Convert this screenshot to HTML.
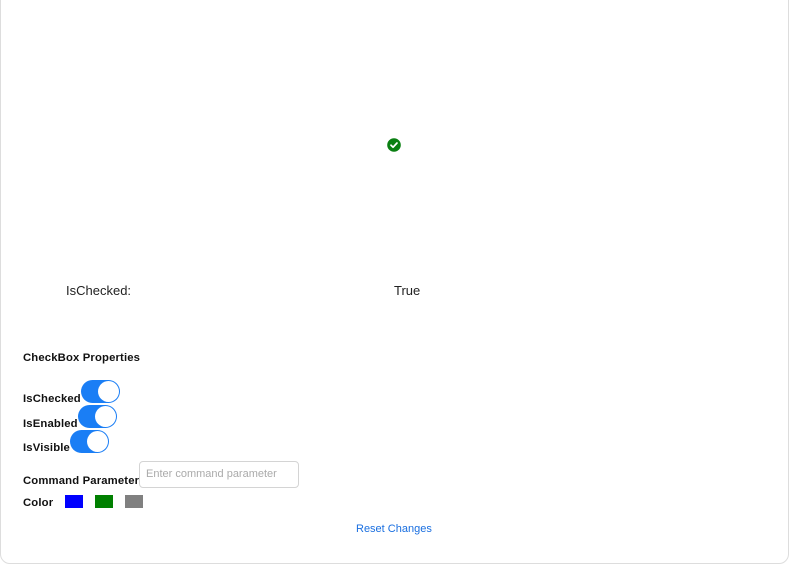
<!DOCTYPE html>
<html><head><style>
body{margin:0;width:789px;height:563px;background:#fff;font-family:"Liberation Sans",Helvetica,sans-serif;position:relative;overflow:hidden}
.frame{position:absolute;left:0;top:-20px;width:787px;height:582px;border:1px solid #ddd;border-radius:10px}
.t{position:absolute;font-size:11.3px;font-weight:bold;color:#111;white-space:nowrap;letter-spacing:0.15px}
.sw{position:absolute;width:39px;height:23px;border-radius:12px;background:#1a7ef5}
.sw::after{content:"";position:absolute;right:1px;top:1px;width:21px;height:21px;border-radius:50%;background:#fff}
.c{position:absolute;top:495px;width:18px;height:13px}
</style></head><body>
<div class="frame"></div>
<svg style="position:absolute;left:387px;top:138px" width="14" height="14" viewBox="0 0 14 14"><circle cx="7" cy="7" r="6.8" fill="#0a7f12"/><path d="M4 7.2 L6.1 9.2 L10 5" stroke="#fff" stroke-width="1.7" fill="none" stroke-linecap="round" stroke-linejoin="round"/></svg>
<div style="position:absolute;left:66px;top:283px;font-size:13px;color:#222">IsChecked:</div>
<div style="position:absolute;left:394px;top:283px;font-size:13px;color:#222">True</div>
<div class="t" style="left:23px;top:352px">CheckBox Properties</div>
<div class="t" style="left:23px;top:393px">IsChecked</div><div class="sw" style="left:81px;top:380px"></div>
<div class="t" style="left:23px;top:418px">IsEnabled</div><div class="sw" style="left:78px;top:405px"></div>
<div class="t" style="left:23px;top:442px">IsVisible</div><div class="sw" style="left:70px;top:430px"></div>
<div class="t" style="left:23px;top:475px">Command Parameter</div>
<div style="position:absolute;left:139px;top:461px;font-size:11px;color:#aaa;line-height:25px;padding-left:6px;box-sizing:border-box;width:160px;height:27px;border:1px solid #d4d4d4;border-radius:4px">Enter command parameter</div>
<div class="t" style="left:23px;top:497px">Color</div>
<div class="c" style="left:65px;background:#0000ff"></div>
<div class="c" style="left:95px;background:#008000"></div>
<div class="c" style="left:125px;background:#808080"></div>
<div style="position:absolute;left:356px;top:523px;font-size:11px;color:#1a6fe0">Reset Changes</div>
</body></html>
